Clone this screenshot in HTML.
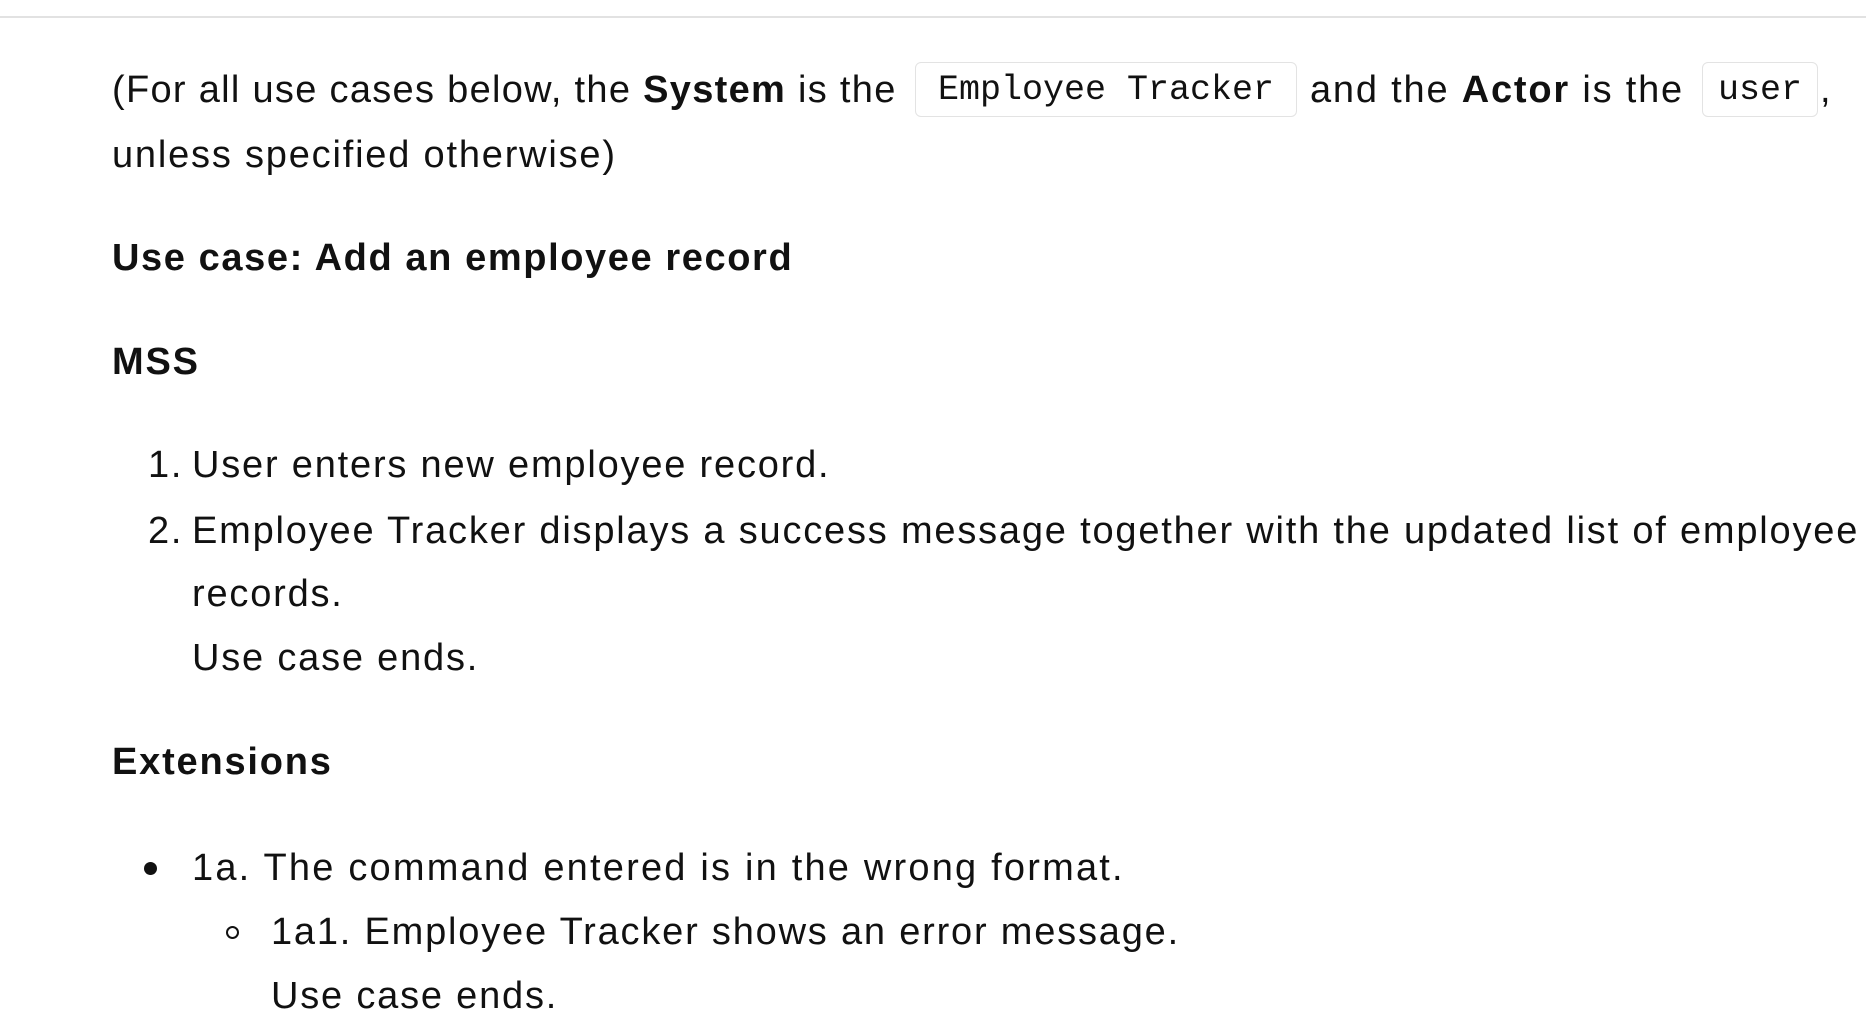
<!DOCTYPE html>
<html><head><meta charset="utf-8"><style>
html,body{margin:0;padding:0;background:#fff;width:1866px;height:1036px;overflow:hidden}
body{font-family:"Liberation Sans",sans-serif;font-size:38px;letter-spacing:1.8px;color:#111;position:relative}
.top{position:absolute;left:0;top:0;width:1866px;height:16px;border-bottom:2px solid #e2e2e2}
.l{position:absolute;line-height:64px;white-space:nowrap}
b{font-weight:bold}
.code{position:absolute;top:62px;height:55px;border:1.5px solid #e3e3e3;border-radius:6px;font-family:"Liberation Mono",monospace;font-size:35px;letter-spacing:0;line-height:55px;text-align:center;box-sizing:border-box}
.dot{position:absolute;width:13px;height:13px;border-radius:50%;background:#111}
.circ{position:absolute;width:13px;height:13px;border-radius:50%;border:2.5px solid #111;box-sizing:border-box}
</style></head><body>
<div class="top"></div>
<div class="l" style="left:112px;top:58px;letter-spacing:1.3px">(For all use cases below, the <b>System</b> is the</div>
<div class="code" style="left:915px;width:382px;">Employee Tracker</div>
<div class="l" style="left:1310px;top:58px;">and the <b>Actor</b> is the</div>
<div class="code" style="left:1702px;width:116px;">user</div>
<div class="l" style="left:1820px;top:58px;">,</div>
<div class="l" style="left:112px;top:123px;">unless specified otherwise)</div>
<div class="l" style="left:112px;top:226px;font-weight:bold;letter-spacing:1.6px">Use case: Add an employee record</div>
<div class="l" style="left:112px;top:330px;font-weight:bold">MSS</div>
<div class="l" style="left:148px;top:433px;">1.</div>
<div class="l" style="left:192px;top:433px;">User enters new employee record.</div>
<div class="l" style="left:148px;top:499px;">2.</div>
<div class="l" style="left:192px;top:499px;">Employee Tracker displays a success message together with the updated list of employee</div>
<div class="l" style="left:192px;top:562px;">records.</div>
<div class="l" style="left:192px;top:626px;">Use case ends.</div>
<div class="l" style="left:112px;top:730px;font-weight:bold">Extensions</div>
<div class="dot" style="left:144px;top:862px;"></div>
<div class="l" style="left:192px;top:836px;letter-spacing:2.2px">1a. The command entered is in the wrong format.</div>
<div class="circ" style="left:226px;top:926px;"></div>
<div class="l" style="left:271px;top:900px;">1a1. Employee Tracker shows an error message.</div>
<div class="l" style="left:271px;top:964px;">Use case ends.</div>
</body></html>
